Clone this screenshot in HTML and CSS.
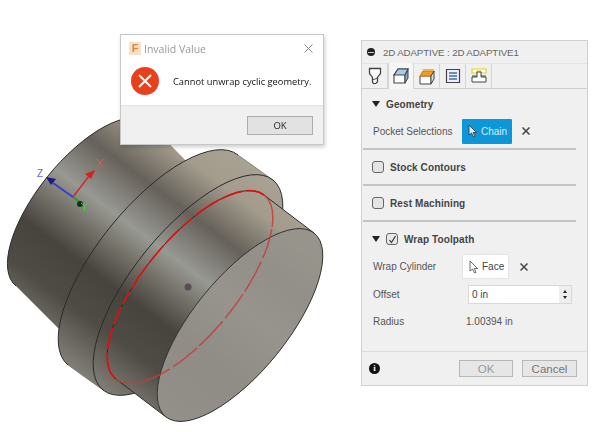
FILE: index.html
```html
<!DOCTYPE html>
<html lang="en">
<head>
<meta charset="utf-8">
<title>2D Adaptive</title>
<link rel="stylesheet" href="styles.css">
</head>
<body>
<main class="stage">
  <svg class="model" width="600" height="432" viewBox="0 0 600 432" aria-hidden="true">
    <defs>
      <linearGradient id="metal" gradientUnits="userSpaceOnUse" x1="18" y1="-24" x2="-156" y2="208">
        <stop offset="0" stop-color="#aaa496"/>
        <stop offset="0.155" stop-color="#a39c8d"/>
        <stop offset="0.3" stop-color="#66615a"/>
        <stop offset="0.455" stop-color="#989993"/>
        <stop offset="0.54" stop-color="#77746c"/>
        <stop offset="0.66" stop-color="#47433d"/>
        <stop offset="0.8" stop-color="#4f4c46"/>
        <stop offset="1" stop-color="#8a8880"/>
      </linearGradient>
    </defs>

    <!-- rear shaft -->
    <path d="M148 122 L195 170 L60 330 L16 286 A105 44 -51 0 1 148 122 Z" class="metal"/>
    <path d="M148 122 A105 44 -51 0 0 16 286" class="edge"/>

    <!-- flange -->
    <path d="M238 155 L273 180 L103 390 L68 365 A135 54 -51 0 1 238 155 Z" class="metal"/>
    <path d="M238 155 A135 54 -51 0 0 68 365" class="edge"/>
    <path d="M238 155 L273 180 M68 365 L103 390" class="edge-soft"/>
    <path d="M273 180 A135 54 -51 1 0 103 390 A135 54 -51 1 0 273 180 Z" class="metal ring"/>

    <!-- front boss -->
    <path d="M264 195 L314 233 A118 47 -51 0 1 166 417 L116 379 A118 47 -51 0 1 264 195 Z" class="metal"/>
    <path d="M264 195 L314 233 M116 379 L166 417" class="edge"/>
    <path d="M314 233 A118 47 -51 1 0 166 417 A118 47 -51 1 0 314 233 Z" class="face"/>

    <!-- selected chain -->
    <path d="M264 195 A118 47 -51 0 0 116 379" class="edge"/>
    <path d="M264 195 A118 47 -51 0 0 116 379" class="chain-solid"/>
    <path d="M264 195 A118 47 -51 0 1 116 379" class="chain-faded"/>

    <circle cx="188" cy="287" r="3.500" fill="#5c4a55"/>

    <!-- axis triad -->
    <path d="M73 197 L89 176" class="axis-x"/>
    <path d="M95 170 L85 174 L91 179 Z" fill="#d92020"/>
    <path d="M97 159 L103 167 M103 159 L97 167" class="axis-x-label"/>
    <path d="M73 197 L53 183" class="axis-z"/>
    <path d="M46 177 L56 179 L51 185 Z" fill="#1c1c88"/>
    <path d="M73 197 L81 203" class="axis-y"/>
    <circle cx="80" cy="204" r="3" fill="#11331a"/>
    <text x="37" y="177" class="axis-label-z">Z</text>
    <path d="M81 203 L84.500 206 L88 203 M84.500 206 L84.500 211" class="axis-y-label"/>
  </svg>

  <section class="dialog">
    <header class="dialog-title">
      <span class="app-icon">F</span>
      <span class="dialog-name">Invalid Value</span>
      <svg class="dialog-close" width="9" height="9" viewBox="0 0 9 9" aria-hidden="true"><path d="M.5.500 8.500 8.500M8.500.500 .5 8.500"/></svg>
    </header>
    <div class="dialog-body">
      <svg class="error-icon" width="28" height="28" viewBox="0 0 28 28" aria-hidden="true">
        <circle cx="14" cy="14" r="14" fill="#e8401c"/>
        <path d="M8 8 20 20M20 8 8 20" stroke="#fff" stroke-width="2" fill="none"/>
      </svg>
      <p class="dialog-message">Cannot unwrap cyclic geometry.</p>
    </div>
    <footer class="dialog-foot">
      <button class="dialog-ok">OK</button>
    </footer>
  </section>

  <section class="panel">
    <header class="panel-head">
      <span class="minus"></span>
      <span>2D ADAPTIVE : 2D ADAPTIVE1</span>
    </header>
    <nav class="tabs">
      <div class="tab">
        <svg width="14" height="18" viewBox="0 0 14 18" aria-hidden="true"><path d="M1.500 1.500H12.500V6C12.500 8 10 8.500 9.500 10.500V14.500C9 16 7 17 5.500 16.500L4.500 15V10.500C4 8.500 1.500 8 1.500 6Z" fill="#fff" stroke="#444" stroke-width="1.300"/><path d="M4.500 13 9.500 11" stroke="#444"/></svg>
      </div>
      <div class="tab tab-active">
        <svg width="18" height="18" viewBox="0 0 18 18" aria-hidden="true"><path d="M2 8 6 2H16L13 8V16H2Z" fill="#fff" stroke="#444" stroke-width="1.100"/><path d="M6 2H16L13 8H2Z" fill="#a9cbe6" stroke="#444" stroke-width="1.100"/><path d="M13 8 16 3V11L13 16Z" fill="#7fa9cc" stroke="#444"/></svg>
      </div>
      <div class="tab">
        <svg width="18" height="18" viewBox="0 0 18 18" aria-hidden="true"><path d="M2 9H13V17H2Z" fill="#fff" stroke="#444"/><path d="M2 9 5 4H16L13 9Z" fill="#f09a2c" stroke="#c8791b"/><path d="M13 9 16 4V12L13 17Z" fill="#ddd" stroke="#444"/><path d="M5 2H16V4H5Z" fill="#f6b04c"/></svg>
      </div>
      <div class="tab">
        <svg width="16" height="16" viewBox="0 0 16 16" aria-hidden="true"><path d="M1.500 1.500H14.500V14.500H1.500Z" fill="#eef" stroke="#444" stroke-width="1.200"/><path d="M4 5H12M4 8H12M4 11H12" stroke="#3f6f9c" stroke-width="1.300"/></svg>
      </div>
      <div class="tab">
        <svg width="16" height="16" viewBox="0 0 16 16" aria-hidden="true"><path d="M1 1H15V5H10V3H6V5H1Z" fill="#fff" stroke="#e6d21e" stroke-width="1.200"/><path d="M1 8H15" stroke="#4aa83a" stroke-width="1.500"/><path d="M6 4H10V9H15V14H1V9H6Z" fill="#fff" stroke="#444"/></svg>
      </div>
    </nav>

    <div class="sections">
      <div class="group group-geometry">
        <h2 class="group-title"><span class="caret"></span>Geometry</h2>
        <div class="row row-select">
          <span class="row-label">Pocket Selections</span>
          <button class="select select-on">
            <svg width="10" height="14" viewBox="0 0 10 14" aria-hidden="true"><path d="M1 1V11L3.500 9 5.500 13 7 12.300 5.200 8.500H8.500Z" fill="#d8e8f4" stroke="#333" stroke-width=".8"/></svg>
            Chain
          </button>
          <svg class="clear" width="8" height="8" viewBox="0 0 8 8" aria-hidden="true"><path d="M.5.500 7.500 7.500M7.500.500 .5 7.500"/></svg>
        </div>
      </div>
      <div class="group group-check">
        <h2 class="group-title"><span class="box"></span>Stock Contours</h2>
      </div>
      <div class="group group-check">
        <h2 class="group-title"><span class="box"></span>Rest Machining</h2>
      </div>
      <div class="group-last">
        <h2 class="group-title"><span class="caret"></span><span class="box box-on">
          <svg width="9" height="9" viewBox="0 0 9 9" aria-hidden="true"><path d="M1.500 5 3.500 7.500 7.500 1" fill="none" stroke="#333" stroke-width="1.200"/></svg>
        </span>Wrap Toolpath</h2>
        <div class="row row-face">
          <span class="row-label">Wrap Cylinder</span>
          <button class="select select-off">
            <svg width="10" height="14" viewBox="0 0 10 14" aria-hidden="true"><path d="M1 1V11L3.500 9 5.500 13 7 12.300 5.200 8.500H8.500Z" fill="#fff" stroke="#444" stroke-width=".8"/></svg>
            Face
          </button>
          <svg class="clear clear-face" width="8" height="8" viewBox="0 0 8 8" aria-hidden="true"><path d="M.5.500 7.500 7.500M7.500.500 .5 7.500"/></svg>
        </div>
        <div class="row row-offset">
          <span class="row-label row-label-offset">Offset</span>
          <div class="spin">
            <span class="spin-value">0 in</span>
            <span class="spin-arrows"><i class="up"></i><i class="down"></i></span>
          </div>
        </div>
        <div class="row row-radius">
          <span class="row-label row-label-radius">Radius</span>
          <span class="radius-value">1.00394 in</span>
        </div>
      </div>
    </div>

    <footer class="panel-foot">
      <span class="info">i</span>
      <button class="foot-btn foot-ok">OK</button>
      <button class="foot-btn foot-cancel">Cancel</button>
    </footer>
  </section>
</main>
</body>
</html>
```
FILE: styles.css
```css
* { box-sizing: border-box; }
html, body { margin: 0; padding: 0; background: #fff; }
body { font-family: "Liberation Sans", Arial, sans-serif; color: #444; }
button { font: inherit; padding: 0; cursor: default; }

.stage { position: relative; width: 600px; height: 432px; overflow: hidden; filter: blur(.35px); }
.model { position: absolute; left: 0; top: 0; }
.metal { fill: url(#metal); }
.ring { stroke: #2b2b2b; stroke-width: 1; }
.edge { fill: none; stroke: #2b2b2b; stroke-width: 1; }
.edge-soft { fill: none; stroke: #5a5a5a; stroke-width: .6; }
.face { fill: #96948c; fill-opacity: .92; stroke: #333; stroke-width: 1; }
.chain-solid { fill: none; stroke: #e01010; stroke-width: 1.700; stroke-dasharray: 19 4 22 3 28 4 14 3; }
.chain-faded { fill: none; stroke: #c83c38; stroke-width: 1.500; stroke-dasharray: 34 3 30 4; opacity: .85; }
.axis-x { stroke: #d92020; stroke-width: 1.300; }
.axis-x-label { stroke: #e65a5a; stroke-width: .9; fill: none; }
.axis-z { stroke: #3c3cc8; stroke-width: 2; }
.axis-y { stroke: #2a9a2a; stroke-width: 2; }
.axis-y-label { stroke: #4bc94b; stroke-width: 1; fill: none; }
.axis-label-z { font: 10px "Liberation Sans", sans-serif; fill: #5a5af5; }

/* message box */
.dialog {
  position: absolute; left: 120px; top: 34px; width: 204px; height: 111px;
  background: #fff; border: 1px solid #c8c8c8;
  box-shadow: 1px 2px 4px rgba(0,0,0,.2);
  display: flex; flex-direction: column;
  font-family: "Open Sans", sans-serif;
}
.dialog-title { height: 27px; display: flex; align-items: center; padding: 0 10px 0 8px; }
.app-icon {
  width: 12px; height: 13px; background: #fbe0c8; color: #e8852a;
  font: bold 11px/13px "Liberation Sans", sans-serif; text-align: center;
}
.dialog-name { margin-left: 3px; font-size: 10.500px; color: #999; flex: 1; }
.dialog-close path { stroke: #888; fill: none; }
.dialog-body { flex: 1; display: flex; align-items: center; padding: 0 0 5px 10px; gap: 14px; }
.dialog-message { margin: 0; font-size: 9.300px; font-weight: 500; color: #111; white-space: nowrap; }
.dialog-foot {
  height: 39px; background: #f0f0f0; border-top: 1px solid #e4e4e4;
  display: flex; justify-content: flex-end; align-items: center; padding: 0 10px 0 0;
}
.dialog-ok { width: 66px; height: 19px; background: #e2e2e2; border: 1px solid #adadad; font-size: 9.500px; color: #222; }

/* panel */
.panel {
  position: absolute; left: 361px; top: 40px; width: 227px; height: 346px;
  background: #f0f0f0; border: 1px solid #d0d0d0;
  display: flex; flex-direction: column; font-size: 10px;
}
.panel-head { height: 23px; flex: none; display: flex; align-items: center; gap: 8px; padding-left: 5px; color: #666; font-size: 9.700px; letter-spacing: -.1px; border-bottom: 1px solid #e4e4e4; }
.minus { width: 8px; height: 8px; border-radius: 50%; background: #222; position: relative; }
.minus::after { content: ""; position: absolute; left: 1px; right: 1px; top: 3.500px; height: 1px; background: #ccc; }
.tabs { height: 25px; flex: none; display: flex; align-items: flex-end; border-bottom: 1px solid #cfcfcf; }
.tab { width: 26px; height: 24px; display: flex; align-items: center; justify-content: center; border-right: 1px solid #d4d4d4; }
.tab-active { background: #f6f6f6; height: 26px; margin-bottom: -1px; border-left: 1px solid #d4d4d4; border-right: 1px solid #d4d4d4; }
.sections { flex: 1; display: flex; flex-direction: column; padding: 0 11px 0 1px; }
.group { border-bottom: 2px solid #c4c4c4; }
.group-geometry { height: 61px; }
.group-check { height: 36px; }
.group-last { flex: 1; }
.group-title { margin: 0; display: flex; align-items: center; height: 30px; font-size: 10px; font-weight: bold; color: #444; padding-left: 9px; letter-spacing: .1px; }
.group-check .group-title { height: 34px; }
.group-last .group-title { height: 34px; }
.caret { width: 0; height: 0; border-left: 4px solid transparent; border-right: 4px solid transparent; border-top: 6px solid #222; margin-right: 6px; }
.box { width: 12px; height: 12px; border: 1.500px solid #666; border-radius: 3px; background: #e4e4e4; margin-right: 6px; display: flex; align-items: center; justify-content: center; }
.box-on { background: #e8e8e8; }
.row { display: flex; align-items: center; color: #555; }
.row-select { height: 26px; margin-top: -1px; padding-left: 10px; }
.row-label { width: 89px; flex: none; }
.select { display: flex; align-items: center; gap: 3px; height: 25px; border-radius: 1px; border: none; padding-left: 6px; font-size: 10px; }
.select-on { width: 50px; background: #0d96d8; color: #d9eef8; }
.select-off { width: 47px; background: #fff; color: #444; border: 1px solid #e4e4e4; }
.clear { margin-left: 10px; }
.clear path { stroke: #444; stroke-width: 1.500; fill: none; }
.clear-face { margin-left: 11px; }
.row-face { height: 25px; padding-left: 10px; margin-top: -2px; }
.row-offset { height: 19px; margin-top: 6px; padding-left: 10px; }
.row-label-offset { width: 95px; }
.spin { width: 104px; height: 19px; background: #fff; border: 1px solid #d8d8d8; display: flex; align-items: center; justify-content: space-between; padding-left: 3px; font-size: 10px; color: #444; }
.spin-arrows { width: 12px; height: 17px; background: #eee; display: flex; flex-direction: column; align-items: center; justify-content: center; gap: 3px; }
.spin-arrows i { display: block; width: 0; height: 0; border-left: 2px solid transparent; border-right: 2px solid transparent; }
.up { border-bottom: 3px solid #222; }
.down { border-top: 3px solid #222; }
.row-radius { height: 14px; margin-top: 10px; padding-left: 10px; }
.row-label-radius { width: 93px; }
.radius-value { font-size: 10px; color: #555; }
.panel-foot { height: 34px; flex: none; border-top: 1px solid #dcdcdc; display: flex; align-items: center; padding: 0 10px 0 7px; }
.info { width: 11px; height: 11px; border-radius: 50%; background: #111; color: #fff; font: bold 9px/11px "Liberation Serif", serif; text-align: center; margin-right: auto; }
.foot-btn { height: 17px; background: #e6e6e6; border: 1px solid #b8b8b8; font-size: 11.500px; }
.foot-ok { width: 54px; color: #999; margin-right: 9px; }
.foot-cancel { width: 55px; color: #777; }
```
